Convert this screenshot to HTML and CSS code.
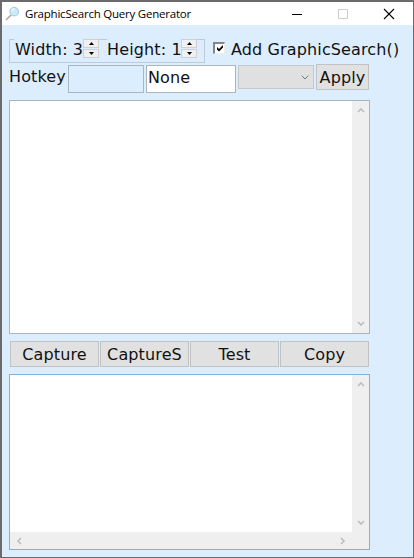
FILE: index.html
```
<!DOCTYPE html>
<html lang="en">
<head>
<meta charset="utf-8">
<title>GraphicSearch Query Generator</title>
<link rel="stylesheet" href="styles.css">
</head>
<body>
<div class="window">
  <header class="titlebar">
    <svg class="app-icon" width="16" height="16" viewBox="0 0 16 16"><path d="M1.5 13.5 5.8 9.2" stroke="#b3a79c" stroke-width="1.6" stroke-linecap="round"/><circle cx="9.2" cy="5.6" r="4.3" fill="#c9ebfb" stroke="#a9c5d6"/><path d="M7 5.5C7 4 8 3 9.5 3" fill="none" stroke="#effaff" stroke-width="1.3"/></svg>
    <h1 class="title">GraphicSearch Query Generator</h1>
    <div class="controls">
      <svg width="12" height="12" viewBox="0 0 12 12"><path d="M1 6.5h10" stroke="#000"/></svg>
      <svg width="12" height="12" viewBox="0 0 12 12"><path d="M1.5 1.5h9v9h-9z" fill="none" stroke="#ccc"/></svg>
      <svg width="12" height="12" viewBox="0 0 12 12"><path d="m1 1 10 10M11 1 1 11" stroke="#000" stroke-width="1.1"/></svg>
    </div>
  </header>
  <main class="content">
    <div class="row options">
      <div class="group">
        <span class="label width-label">Width: 3</span>
        <span class="spinner"><span class="step"><svg width="5" height="3"><path d="m0 3 2.5-3L5 3z"/></svg></span><span class="step"><svg width="5" height="3"><path d="m0 0 2.5 3L5 0z"/></svg></span></span>
        <span class="label height-label">Height: 1</span>
        <span class="spinner"><span class="step"><svg width="5" height="3"><path d="m0 3 2.5-3L5 3z"/></svg></span><span class="step"><svg width="5" height="3"><path d="m0 0 2.5 3L5 0z"/></svg></span></span>
      </div>
      <span class="checkbox"><svg width="6" height="7" viewBox="0 0 6 7"><path d="M0 2v2.5l2 2 4-4V0L2 4z"/></svg></span>
      <span class="add-label">Add GraphicSearch()</span>
    </div>
    <div class="row hotkeys">
      <span class="hotkey-label">Hotkey</span>
      <div class="field disabled"></div>
      <div class="field named">None</div>
      <div class="select"><svg width="8" height="5" viewBox="0 0 8 5"><path d="m.7.7 3.3 3.3L7.3.7" fill="none" stroke="#777"/></svg></div>
      <div class="button apply">Apply</div>
    </div>
    <section class="editor preview">
      <div class="vbar">
        <svg class="arrow" width="8" height="6" viewBox="0 0 8 6"><path d="m1 5 3-3 3 3"/></svg>
        <svg class="arrow" width="8" height="6" viewBox="0 0 8 6"><path d="m1 1 3 3 3-3"/></svg>
      </div>
    </section>
    <div class="row actions">
      <div class="button">Capture</div>
      <div class="button">CaptureS</div>
      <div class="button">Test</div>
      <div class="button">Copy</div>
    </div>
    <section class="editor output">
      <div class="vbar">
        <svg class="arrow" width="8" height="6" viewBox="0 0 8 6"><path d="m1 5 3-3 3 3"/></svg>
        <svg class="arrow" width="8" height="6" viewBox="0 0 8 6"><path d="m1 1 3 3 3-3"/></svg>
      </div>
      <div class="hbar">
        <svg class="arrow" width="6" height="8" viewBox="0 0 6 8"><path d="M5 1 2 4l3 3"/></svg>
        <svg class="arrow" width="6" height="8" viewBox="0 0 6 8"><path d="m1 1 3 3-3 3"/></svg>
      </div>
    </section>
  </main>
</div>
</body>
</html>
```
FILE: styles.css
```
* { box-sizing: border-box; }
body { margin: 0; }
svg { display: block; flex: none; }

.window {
  width: 414px;
  height: 558px;
  border: solid #6b6b6d;
  border-width: 2px 1px 1px 2px;
  background: #dcedfe;
  color: #111;
  font: 16px/20px "DejaVu Sans", sans-serif;
  letter-spacing: 0.13px;
  white-space: nowrap;
  overflow: hidden;
}

.titlebar {
  display: flex;
  align-items: center;
  height: 23px;
  padding: 0 18px 0 3px;
  background: #fff;
}
.title {
  margin: 0 0 0 4px;
  font: 11.5px/20px "Open Sans", sans-serif;
  letter-spacing: -0.22px;
  color: #000;
}
.controls { display: flex; gap: 34px; margin-left: auto; }

.content { padding: 14px 0 0 7px; }
.row { display: flex; }

.options { height: 24px; margin-bottom: 1px; }
.group {
  display: flex;
  width: 196px;
  height: 24px;
  border: 1px solid #bdcbd8;
  padding-left: 4px;
}
.label { height: 21px; margin-top: -1px; padding-top: 1px; background: #dcedfe; overflow: hidden; }
.width-label { width: 69px; padding-left: 1px; }
.height-label { width: 74px; margin-left: 8px; }
.spinner {
  display: flex;
  flex-direction: column;
  width: 16px;
  height: 19px;
  margin-top: -1px;
  gap: 1px;
}
.step {
  display: flex;
  align-items: center;
  justify-content: center;
  height: 9px;
  background: #f0f0f0;
  border: 1px solid #d0d0d0;
}
.checkbox {
  display: flex;
  align-items: center;
  justify-content: center;
  width: 12px;
  height: 12px;
  margin: 3px 0 0 8px;
  border: solid;
  border-width: 2px 1px 1px 2px;
  border-color: #858585 #eee #eee #858585;
  background: #fff;
}
.add-label { margin: 1px 0 0 6px; }

.hotkeys { height: 36px; padding-top: 1px; }
.hotkey-label { width: 59px; margin-top: 2px; }
.field { height: 28px; border: 1px solid #abb5be; }
.disabled { width: 76px; }
.named { width: 90px; margin-left: 2px; padding: 2px 1px; background: #fff; }
.select {
  display: flex;
  align-items: center;
  justify-content: flex-end;
  width: 76px;
  height: 24px;
  margin-left: 2px;
  padding-right: 4px;
  border: 1px solid #c5c9cd;
  background: #e0e0e0;
}
.button {
  width: 89px;
  height: 26px;
  border: 1px solid #c0c3c6;
  background: #e1e1e1;
  line-height: 25px;
  text-align: center;
}
.apply { width: 53px; margin: -1px 0 0 2px; line-height: 26px; }

.editor {
  display: grid;
  grid-template-columns: 1fr 17px;
  width: 361px;
  border: 1px solid #abb5be;
  background: #fff;
}
.preview { height: 234px; }
.output {
  height: 176px;
  grid-template-rows: 1fr 17px;
  border-color: #7eb4d9;
}
.vbar {
  grid-column: 2;
  display: flex;
  flex-direction: column;
  align-items: center;
  justify-content: space-between;
  padding: 6px 0;
  background: #efefef;
}
.hbar {
  grid-column: 1 / 3;
  display: flex;
  align-items: center;
  justify-content: space-between;
  padding: 0 23px 0 6px;
  background: #efefef;
}
.arrow { fill: none; stroke: #bdbdbd; stroke-width: 1.6; }
.actions { gap: 1px; margin: 7px 0 7px 1px; }
```
